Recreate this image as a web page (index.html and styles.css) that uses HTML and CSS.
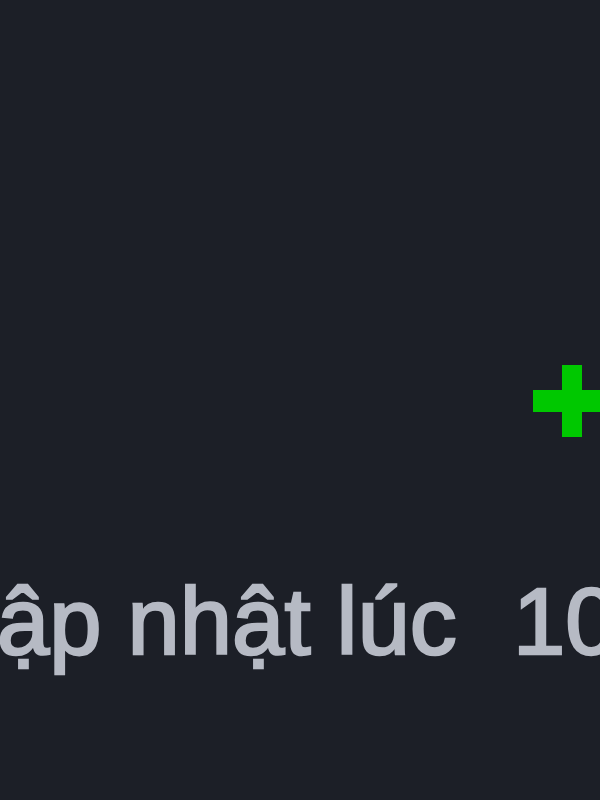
FILE: index.html
```html
<!DOCTYPE html>
<html lang="vi">
<head>
    <meta charset="UTF-8">
    <meta name="viewport" content="width=device-width, initial-scale=1.0">
    <title>Cập nhật</title>
    <link rel="stylesheet" href="styles.css">
</head>
<body>
    <div class="panel">
        <div class="toolbar">
            <svg class="add-icon" viewBox="0 0 78 72" width="78" height="72">
                <rect x="29" y="0" width="20" height="72" fill="#00c800"/>
                <rect x="0" y="25" width="78" height="22" fill="#00c800"/>
            </svg>
        </div>
        <div class="status">Cập nhật lúc&nbsp; <span class="time">10:25</span></div>
    </div>
</body>
</html>
```

FILE: styles.css
```css
body {
    margin: 0;
    padding: 0;
    background-color: #1c1f27;
    font-family: "Liberation Sans", Arial, sans-serif;
    overflow: hidden;
}
.panel {
    width: 600px;
    height: 800px;
    overflow: hidden;
}
.toolbar {
    display: flex;
    justify-content: flex-end;
    margin-top: 365px;
    margin-right: -11px;
}
.add-icon {
    display: block;
}
.status {
    margin-top: 138px;
    margin-left: -71px;
    font-size: 94px;
    line-height: 94px;
    color: #b6bac4;
    -webkit-text-stroke: 2.5px #b6bac4;
    white-space: nowrap;
}
.time {
    margin-left: 4px;
}
```
